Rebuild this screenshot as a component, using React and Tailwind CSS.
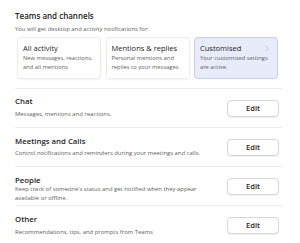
import React from "react";

const font = { fontFamily: '"Open Sans", "Noto Sans", sans-serif' };

function Card({ title, desc, active }) {
  return (
    <div
      className={`relative w-[84px] h-[42px] rounded-[4px] border px-[5px] pt-[4px] ${
        active
          ? "bg-[#e8ebfa] border-[#c5cbf3]"
          : "bg-white border-[#ececec] shadow-[0_1px_2px_rgba(0,0,0,0.04)]"
      }`}
    >
      <div className="text-[7.5px] leading-[12px] text-[#242424] whitespace-nowrap">{title}</div>
      <div className="text-[5.8px] leading-[9px] text-[#616161]">{desc}</div>
      {active && (
        <svg className="absolute right-[8px] top-[7px]" width="4" height="7" viewBox="0 0 4 7">
          <path d="M0.7 0.7 L3.2 3.5 L0.7 6.3" fill="none" stroke="#b8b8b8" strokeWidth="0.7" />
        </svg>
      )}
    </div>
  );
}

function Section({ title, desc, pt, mt, titleLh = "leading-[12px]", descLh = "leading-[10px]" }) {
  return (
    <div className="flex border-t border-[#ebebeb] h-[39px]">
      <div className={`flex-1 ${pt}`}>
        <div className={`text-[7.8px] ${titleLh} font-semibold text-[#242424]`}>{title}</div>
        <div className={`text-[5.9px] ${descLh} ${mt} text-[#616161] pr-[14px]`}>{desc}</div>
      </div>
      <div className="pt-[11px] pr-[3px]">
        <button className="block w-[52px] h-[17px] rounded-[4px] border border-[#d6d6d6] bg-white text-[7.5px] font-semibold text-[#242424] shadow-[0_1px_1px_rgba(0,0,0,0.06)]">
          Edit
        </button>
      </div>
    </div>
  );
}

export default function App() {
  return (
    <div style={font} className="w-[300px] h-[243px] bg-white pl-[15px] pr-[18px] pt-[10px] overflow-hidden">
      <div className="text-[8px] leading-[12px] font-semibold text-[#242424]">Teams and channels</div>
      <div className="mt-[2px] text-[5.9px] leading-[10px] text-[#616161]">
        You will get desktop and activity notifications for:
      </div>
      <div className="mt-[3px] flex gap-[4.5px] pl-[2px]">
        <Card title="All activity" desc="New messages, reactions, and all mentions" />
        <Card title="Mentions & replies" desc="Personal mentions and replies to your messages" />
        <Card title="Customised" desc="Your customised settings are active." active />
      </div>
      <div className="mt-[9px]">
        <Section title="Chat" desc="Messages, mentions and reactions." pt="pt-[6px]" mt="mt-[2px]" />
        <Section
          title="Meetings and Calls"
          desc="Control notifications and reminders during your meetings and calls."
          pt="pt-[7px]"
          mt="mt-[1px]"
        />
        <Section
          title="People"
          desc="Keep track of someone's status and get notified when they appear available or offline."
          pt="pt-[8px]"
          mt="mt-0"
          titleLh="leading-[10px]"
          descLh="leading-[9px]"
        />
        <Section
          title="Other"
          desc="Recommendations, tips, and prompts from Teams"
          pt="pt-[7px]"
          mt="mt-[2px]"
        />
      </div>
    </div>
  );
}
